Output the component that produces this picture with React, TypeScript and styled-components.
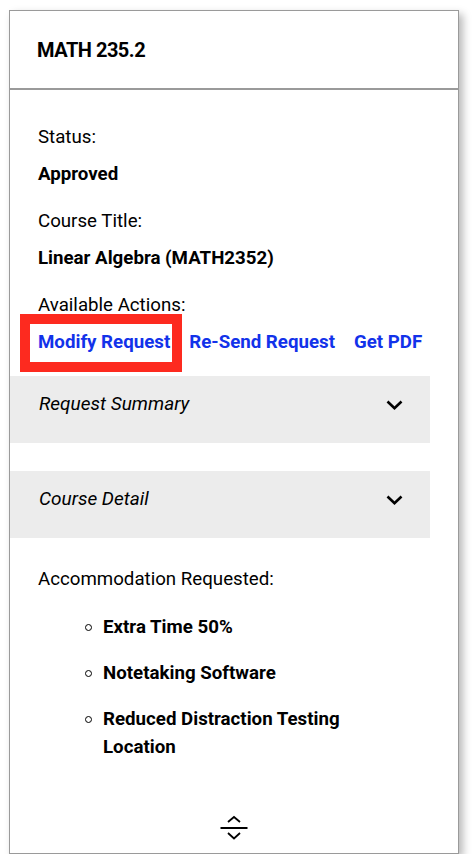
import React from "react";
import styled, { createGlobalStyle } from "styled-components";

const Global = createGlobalStyle`
  html, body { margin: 0; padding: 0; background: #ffffff; }
  body { font-family: Roboto, "Noto Sans", "Liberation Sans", sans-serif; color: #000; }
  * { box-sizing: border-box; }
`;

const Page = styled.div`
  padding: 10px 0 0 9px;
`;

const Card = styled.div`
  width: 450px;
  height: 844px;
  border: 1px solid #9a9a9a;
  background: #fff;
  box-shadow: 4px 4px 8px rgba(0, 0, 0, 0.28);
  display: flex;
  flex-direction: column;
`;

const Header = styled.div`
  height: 79px;
  border-bottom: 2px solid #9a9a9a;
  display: flex;
  align-items: center;
  padding-left: 27px;
`;

const Title = styled.h1`
  margin: 0;
  font-size: 20px;
  font-weight: 700;
  letter-spacing: -0.5px;
  line-height: 24px;
`;

const Body = styled.div`
  flex: 1;
  display: flex;
  flex-direction: column;
  padding: 33px 28px 13px 0;
`;

const Block = styled.div<{ $gap?: number; $after?: number }>`
  padding-left: 28px;
  display: flex;
  flex-direction: column;
  gap: ${(p) => p.$gap ?? 9}px;
  margin-bottom: ${(p) => p.$after ?? 19}px;
`;

const Label = styled.div`
  font-size: 18.7px;
  line-height: 28px;
  font-weight: 400;
`;

const Value = styled.div`
  font-size: 18.7px;
  line-height: 28px;
  font-weight: 700;
`;

const Actions = styled.div`
  display: flex;
  gap: 19px;
`;

const ActionLink = styled.a<{ $highlight?: boolean }>`
  position: relative;
  font-size: 18.7px;
  line-height: 28px;
  font-weight: 700;
  color: #1232ea;
  text-decoration: none;
  white-space: nowrap;
  ${(p) =>
    p.$highlight &&
    `
    &::after {
      content: "";
      position: absolute;
      left: -18px;
      right: -12px;
      top: -14px;
      bottom: -16px;
      border: 10px solid #fd2a1f;
      pointer-events: none;
    }
  `}
`;

const Accordion = styled.div<{ $after?: number }>`
  height: 67px;
  background: #ececec;
  display: flex;
  align-items: center;
  align-content: flex-start;
  justify-content: space-between;
  padding: 0 27px 0 29px;
  margin-bottom: ${(p) => p.$after ?? 0}px;
`;

const AccordionRow = styled.div`
  flex: 1;
  height: 28px;
  margin-top: -11px;
  display: flex;
  align-items: center;
  justify-content: space-between;
`;

const AccordionTitle = styled.span`
  font-size: 19px;
  line-height: 28px;
  font-style: italic;
  font-weight: 400;
`;

const List = styled.ul`
  list-style: none;
  margin: 0 0 0 47px;
  padding: 0;
  display: flex;
  flex-direction: column;
  gap: 18px;
`;

const Item = styled.li`
  display: flex;
  align-items: flex-start;
  gap: 11px;
  font-size: 18.7px;
  line-height: 28px;
  font-weight: 700;
`;

const Marker = styled.span`
  flex: none;
  width: 7px;
  height: 7px;
  margin-top: 11px;
  border: 1.3px solid #000;
  border-radius: 50%;
`;

const ItemText = styled.span`
  max-width: 280px;
`;

const Footer = styled.div`
  margin-top: auto;
  padding-left: 28px;
  display: flex;
  justify-content: center;
`;

const Chevron = () => (
  <svg width="17" height="10" viewBox="0 0 17 10" fill="none" style={{ marginTop: 2 }}>
    <path d="M1.5 1.5 L8.5 8.2 L15.5 1.5" stroke="#000" strokeWidth="2.6" strokeLinecap="butt" strokeLinejoin="miter" />
  </svg>
);

const ExpandIcon = () => (
  <svg width="28" height="26" viewBox="0 0 28 26" fill="none">
    <path d="M8 8 L14 3 L20 8" stroke="#000" strokeWidth="1.8" />
    <path d="M0.5 14 L27.5 14" stroke="#000" strokeWidth="2" />
    <path d="M8 19 L14 24.5 L20 19" stroke="#000" strokeWidth="1.8" />
  </svg>
);

export default function App() {
  return (
    <>
      <Global />
      <Page>
        <Card>
          <Header>
            <Title>MATH 235.2</Title>
          </Header>
          <Body>
            <Block>
              <Label>Status:</Label>
              <Value>Approved</Value>
            </Block>
            <Block>
              <Label>Course Title:</Label>
              <Value>Linear Algebra (MATH2352)</Value>
            </Block>
            <Block $after={20}>
              <Label>Available Actions:</Label>
              <Actions>
                <ActionLink href="#" $highlight>
                  Modify Request
                </ActionLink>
                <ActionLink href="#">Re-Send Request</ActionLink>
                <ActionLink href="#">Get PDF</ActionLink>
              </Actions>
            </Block>
            <Accordion $after={28}>
              <AccordionRow>
                <AccordionTitle>Request Summary</AccordionTitle>
                <Chevron />
              </AccordionRow>
            </Accordion>
            <Accordion $after={27}>
              <AccordionRow>
                <AccordionTitle>Course Detail</AccordionTitle>
                <Chevron />
              </AccordionRow>
            </Accordion>
            <Block $gap={20} $after={0}>
              <Label>Accommodation Requested:</Label>
              <List>
                <Item>
                  <Marker />
                  <ItemText>Extra Time 50%</ItemText>
                </Item>
                <Item>
                  <Marker />
                  <ItemText>Notetaking Software</ItemText>
                </Item>
                <Item>
                  <Marker />
                  <ItemText>Reduced Distraction Testing Location</ItemText>
                </Item>
              </List>
            </Block>
            <Footer>
              <ExpandIcon />
            </Footer>
          </Body>
        </Card>
      </Page>
    </>
  );
}
